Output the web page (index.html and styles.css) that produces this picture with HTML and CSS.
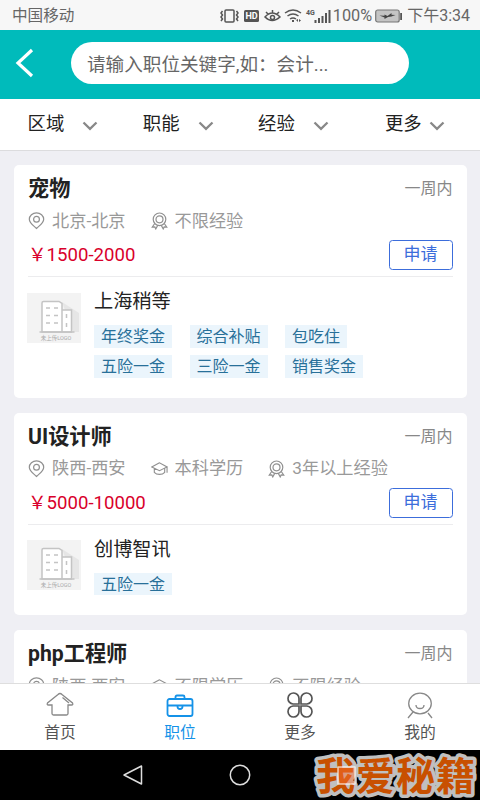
FILE: index.html
```html
<!DOCTYPE html>
<html lang="zh-CN">
<head>
<meta charset="utf-8">
<title>职位</title>
<link rel="stylesheet" href="styles.css">
</head>
<body>
<svg class="defs" width="0" height="0">
  <symbol id="pin" viewBox="0 0 16 18"><path d="M8 16.500C5 13.500.8 11 .8 7.300a7.200 6.500 0 0 1 14.400 0C15.200 11 11 13.500 8 16.500Z"/><circle cx="8" cy="7.300" r="2.900"/></symbol>
  <symbol id="medal" viewBox="0 0 16 18"><circle cx="8" cy="7.300" r="6.300"/><circle cx="8" cy="7.300" r="3.500"/><path d="M3.200 11.500.8 15l2.500-.1 1 2 2-3.700M12.800 11.500l2.400 3.500-2.500-.1-1 2-2-3.700"/></symbol>
  <symbol id="cap" viewBox="0 0 18 18"><path d="M9 2.500.8 6.800 9 10.800l8-4ZM3.500 8.500V12.500c2.500 3 8.500 3 11 0V8.500M17 7v6"/></symbol>
  <symbol id="chevron" viewBox="0 0 16 10"><path d="M1.500 1.500 8 7.800l6.500-6.300"/></symbol>
  <symbol id="building" viewBox="0 0 54 50">
    <path class="shade" d="M35 9 52 20V39H46Z"/>
    <path class="wall" d="M15 39V10q0-1.500 1.500-1.500H32l3 2V39ZM35 39V17h9.500V39Z"/>
    <path class="line" d="M12.500 39h35M19 15h4m4 0h4M19 22.500h4m4 0h4M19 30h4m4 0h4M39.500 21v4m0 5v4"/>
    <text x="29" y="47" text-anchor="middle">未上传LOGO</text>
  </symbol>
</svg>
<div class="phone">
  <div class="status">
    <span class="carrier">中国移动</span>
    <svg class="signals" width="114" height="20" viewBox="0 0 114 20">
      <g fill="none" stroke="#555" stroke-width="1.500">
        <rect x="5" y="4" width="9" height="12" rx="1"/>
        <path d="M2.500 5 1 7l1.500 2L1 11l1.500 2L1 15M16.500 5 18 7l-1.500 2 1.500 2-1.500 2 1.500 2"/>
        <path d="M45 11q7-8 15 0-8 7-15 0ZM46 6l2 2m4.500-4v3M59 6l-2 2"/>
        <circle cx="52.500" cy="11.500" r="2"/>
        <path d="M65 7q8-6 16 0M67.500 10q5.500-4 11 0M70 13q3-2 6 0"/>
      </g>
      <rect x="24" y="4" width="15" height="12" rx="1.500" fill="#555"/>
      <path d="M72 14h2v2h-2Zm4 0 2-1v3Zm3 2v-3l2 1.500ZM94.500 14h2v3h-2Zm3.500-2h2v5h-2Zm3.500-2h2v7h-2Zm3.500-3h2v10h-2Zm3.500-3h2v13h-2Z" fill="#555"/>
      <text x="31.500" y="13" text-anchor="middle" class="hd">HD</text>
      <text x="86" y="9" class="net">4G</text>
    </svg>
    <span class="percent">100%</span>
    <svg class="battery" width="28" height="14" viewBox="0 0 28 14"><rect x=".7" y="1" width="23.500" height="12" rx="2" fill="#c4c4c4" stroke="#777" stroke-width="1.200"/><rect x="25.200" y="4" width="1.800" height="7" fill="#555"/><path d="m4.500 6.500 5 .3V5.500l3 1.500 4-3v1.700l4 .3-4 1.500-3.500.5-3.500 2V8.500Z" fill="#444"/></svg>
    <span class="clock">下午3:34</span>
  </div>
  <header class="header">
    <svg class="back" width="20" height="30" viewBox="0 0 20 30"><path d="M17 2 3 15l14 13"/></svg>
    <div class="search">请输入职位关键字,如：会计...</div>
  </header>
  <nav class="filters">
    <span class="filter">区域<svg><use href="#chevron"/></svg></span>
    <span class="filter">职能<svg><use href="#chevron"/></svg></span>
    <span class="filter">经验<svg><use href="#chevron"/></svg></span>
    <span class="filter last">更多<svg><use href="#chevron"/></svg></span>
  </nav>
  <main class="list">
    <article class="card">
      <div class="top"><h2>宠物</h2><span class="date">一周内</span></div>
      <div class="meta"><span><svg><use href="#pin"/></svg>北京-北京</span><span><svg><use href="#medal"/></svg>不限经验</span></div>
      <div class="pay"><span class="salary">￥1500-2000</span><span class="apply">申请</span></div>
      <div class="company">
        <svg class="logo"><use href="#building"/></svg>
        <div class="info"><h3>上海稍等</h3><div class="tags"><span>年终奖金</span><span>综合补贴</span><span>包吃住</span><span>五险一金</span><span>三险一金</span><span>销售奖金</span></div></div>
      </div>
    </article>
    <article class="card">
      <div class="top"><h2>UI设计师</h2><span class="date">一周内</span></div>
      <div class="meta"><span><svg><use href="#pin"/></svg>陕西-西安</span><span><svg><use href="#cap"/></svg>本科学历</span><span><svg><use href="#medal"/></svg>3年以上经验</span></div>
      <div class="pay"><span class="salary">￥5000-10000</span><span class="apply">申请</span></div>
      <div class="company">
        <svg class="logo"><use href="#building"/></svg>
        <div class="info"><h3>创博智讯</h3><div class="tags"><span>五险一金</span></div></div>
      </div>
    </article>
    <article class="card">
      <div class="top"><h2>php工程师</h2><span class="date">一周内</span></div>
      <div class="meta"><span><svg><use href="#pin"/></svg>陕西-西安</span><span><svg><use href="#cap"/></svg>不限学历</span><span><svg><use href="#medal"/></svg>不限经验</span></div>
    </article>
  </main>
  <nav class="tabs">
    <span class="tab"><svg viewBox="0 0 30 28"><path d="M15 2.500q-1 0-2 1L2.500 12q-1 2 1 2H7v8.500q0 1.500 1.500 1.500h13q1.500 0 1.500-1.500V14h3.500q2 0 1-2L17 3.500q-1-1-2-1ZM17.500 6.500l6.500 5.500"/></svg>首页</span>
    <span class="tab active"><svg viewBox="0 0 30 28"><rect x="2.500" y="8" width="25" height="17" rx="2"/><path d="M10.500 8V6q0-1.500 1.500-1.500h6q1.500 0 1.500 1.500v2M2.500 14.500h25M12.500 14.500v1a2.500 2.500 0 0 0 5 0v-1"/></svg>职位</span>
    <span class="tab more"><svg viewBox="0 0 30 28"><path d="M14 13H8a5.500 5.500 0 1 1 6-5.500ZM16 13h6a5.500 5.500 0 1 0-6-5.500ZM14 15H8a5.500 5.500 0 1 0 6 5.500ZM16 15h6a5.500 5.500 0 1 1-6 5.500Z"/></svg>更多</span>
    <span class="tab"><svg viewBox="0 0 30 28"><ellipse cx="15" cy="12.500" rx="11.300" ry="10.300"/><path d="M11 14q0 3.500 4 3.500t4-3.500M8 21l-5 6M23 22l4 5"/></svg>我的</span>
  </nav>
  <div class="system">
    <svg viewBox="0 0 24 24"><path d="M20.500 3v18L3 12Z"/></svg>
    <svg viewBox="0 0 24 24"><circle cx="12" cy="12" r="9.700"/></svg>
    <svg viewBox="0 0 24 24"><rect x="3" y="3" width="18" height="18" rx="1"/></svg>
    <svg class="watermark" width="170" height="50" viewBox="0 0 170 50"><text x="6" y="39.500">我爱秘籍</text><rect x="28" y="17" width="17" height="17"/></svg>
  </div>
</div>
</body>
</html>
```

FILE: styles.css
```css
* { box-sizing: border-box; margin: 0; padding: 0; }
body { font-family: Roboto, "Noto Sans CJK SC", sans-serif; font-weight: 400; background: #fff; }
.defs { display: block; }
.phone { width: 480px; height: 800px; display: flex; flex-direction: column; overflow: hidden; }

.status { height: 30px; flex: none; background: #f7f7f7; display: flex; align-items: center; padding: 2px 10px 0 12px; font-size: 15.6px; color: #666; line-height: 28px; }
.signals { margin-left: auto; margin-right: -3px; }
.hd { font: 700 9px Roboto, sans-serif; fill: #fff; }
.net { font: 700 7px Roboto, sans-serif; fill: #555; }
.percent { margin: 0 3px 0 2px; font-size: 16.3px; }
.clock { margin-left: 4px; font-size: 16px; }

.header { height: 69px; flex: none; background: #00bbbb; display: flex; align-items: flex-start; padding: 12px 0 0 15px; }
.back { margin-top: 6px; fill: none; stroke: #fff; stroke-width: 3.2; }
.search { width: 338px; height: 42px; margin-left: 36px; border-radius: 21px; background: #fff; padding-left: 16px; font-size: 18.6px; line-height: 47px; color: #666; white-space: nowrap; }

.filters { height: 51px; flex: none; background: #fff; display: flex; padding-left: 27.5px; font-size: 18.4px; line-height: 49px; color: #222; }
.filter { width: 115.3px; display: flex; }
.filter svg { width: 16px; height: 10px; margin: 22px 0 0 18px; fill: none; stroke: #888; stroke-width: 2.3; }
.filter.last { width: auto; margin-left: 11.5px; }
.filter.last svg { margin-left: 7px; }

.list { flex: 1; min-height: 0; overflow: hidden; background: #efeff4; border-top: 1px solid #dcdcde; padding: 14px 13.5px 0 14px; display: flex; flex-direction: column; gap: 15px; }
.card { flex: none; background: #fff; border-radius: 5px; padding: 11px 14px 20px; }
.top { height: 24px; display: flex; justify-content: space-between; align-items: center; }
h2 { font-size: 21.2px; line-height: 24px; font-weight: 700; color: #222; padding-top: 2px; }
.date { font-size: 16px; line-height: 24px; color: #888; padding-top: 2px; }
.meta { height: 40px; display: flex; align-items: center; gap: 25px; font-size: 17.2px; line-height: 24px; color: #999; padding-top: 1px; }
.meta span { display: flex; align-items: center; }
.meta svg { width: 17px; height: 18px; margin: 1px 7px 0 0; fill: none; stroke: #909090; stroke-width: 1.2; }
.pay { height: 37px; display: flex; justify-content: space-between; align-items: flex-start; border-bottom: 1px solid #ececee; }
.salary { font-size: 18.6px; line-height: 31px; color: #d9002b; }
.apply { width: 64px; height: 30px; border: 1px solid #3c6ddb; border-radius: 3.5px; text-align: center; font-size: 17px; line-height: 26px; color: #3c6ddb; }
.company { display: flex; padding-top: 15.5px; }
.logo { width: 54px; height: 50px; margin-left: -1px; background: #f3f3f3; flex: none; }
.wall { fill: #fff; stroke: #c4c4c4; stroke-width: 1.5; }
.line { fill: none; stroke: #c4c4c4; stroke-width: 1.5; }
.shade { fill: #e6e6e6; }
#building text { font-size: 5.5px; fill: #aaa; }
.info { margin-left: 13px; margin-top: -3.5px; }
h3 { font-size: 19.2px; line-height: 26px; font-weight: 400; color: #222; }
.tags { margin-top: 10px; width: 290px; display: flex; flex-wrap: wrap; gap: 7.5px 17.5px; }
.tags span { height: 22.5px; padding: 0 7px; background: #ebf5fc; color: #287099; font-size: 16px; line-height: 23px; }

.tabs { height: 67px; flex: none; border-top: 1px solid #dedede; background: #fff; display: grid; grid-template-columns: repeat(4, 1fr); }
.tab { display: flex; flex-direction: column; align-items: center; padding-top: 7px; font-size: 15.8px; line-height: 27px; color: #555; }
.tab svg { width: 30px; height: 28px; fill: none; stroke: #888; stroke-width: 1.3; }
.tab.active { color: #1492e8; }
.tab.active svg { stroke: #1492e8; stroke-width: 1.8; }
.tab.more svg { stroke: #555; stroke-width: 1.7; }

.system { height: 50px; flex: none; background: #000; display: flex; justify-content: center; align-items: center; gap: 83px; position: relative; }
.system svg { width: 24px; height: 24px; fill: none; stroke: #ddd; stroke-width: 1.5; stroke-linejoin: round; }
.system .watermark { position: absolute; right: 0; top: 0; width: 170px; height: 50px; }
.watermark text { font: 700 39px "Noto Sans CJK SC", sans-serif; letter-spacing: 1px; fill: #c85000; stroke: #c0c0c0; stroke-width: 7px; paint-order: stroke; }
.watermark rect { fill: #ff7030; fill-opacity: .45; stroke: #fff; stroke-opacity: .7; stroke-width: 1.5; }
```
